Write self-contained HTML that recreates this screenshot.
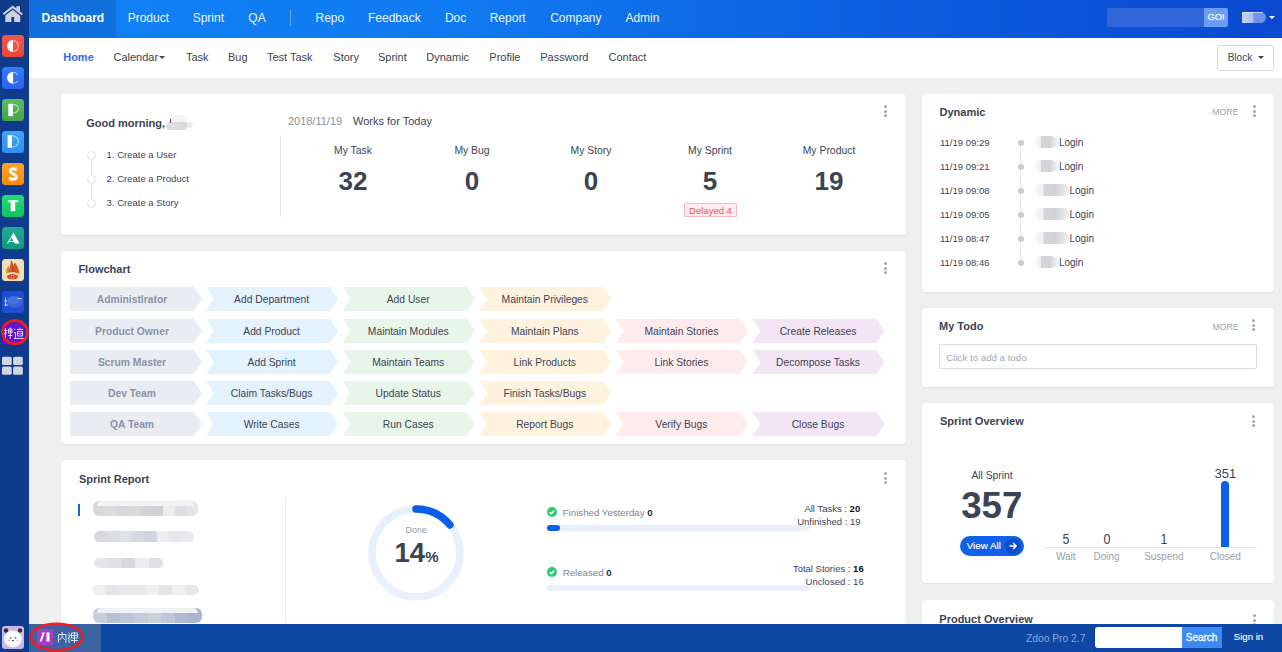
<!DOCTYPE html>
<html><head><meta charset="utf-8"><title>Zdoo Dashboard</title>
<style>
html,body{margin:0;padding:0;width:1282px;height:652px;overflow:hidden;background:#efefef;}
body{position:relative;font-family:"Liberation Sans",sans-serif;}
.r{position:absolute;box-sizing:border-box;}
svg.r{overflow:visible;}
.t{position:absolute;line-height:1;white-space:nowrap;}
</style></head><body>
<div class="r" style="left:0px;top:0px;width:1282px;height:652px;background:#efefef;"></div>
<div class="r" style="left:29px;top:0px;width:1253px;height:37.5px;background:linear-gradient(90deg,#1082f6 0%,#107af0 35%,#0c5ddd 70%,#0a49d0 100%);"></div>
<div class="r" style="left:29px;top:0px;width:87px;height:37.5px;background:rgba(20,90,190,0.45);"></div>
<div class="r" style="left:29px;top:37.5px;width:1253px;height:40.5px;background:#fff;"></div>
<div class="r" style="left:0px;top:0px;width:29px;height:652px;background:#0f3b8d;"></div>
<div class="r" style="left:29px;top:624px;width:1253px;height:28px;background:#0f47a4;"></div>
<svg class="r" style="left:0;top:0;" width="29" height="652" viewBox="0 0 29 652">
<defs>
<linearGradient id="gR" x1="0" y1="0" x2="0" y2="1"><stop offset="0" stop-color="#f1584f"/><stop offset="1" stop-color="#ee4536"/></linearGradient>
<linearGradient id="gC" x1="0" y1="0" x2="0" y2="1"><stop offset="0" stop-color="#337cf8"/><stop offset="1" stop-color="#2a63ef"/></linearGradient>
<linearGradient id="gP" x1="0" y1="0" x2="0" y2="1"><stop offset="0" stop-color="#5cbb5f"/><stop offset="1" stop-color="#45a349"/></linearGradient>
<linearGradient id="gD" x1="0" y1="0" x2="0" y2="1"><stop offset="0" stop-color="#42a5f5"/><stop offset="1" stop-color="#2e8ff0"/></linearGradient>
<linearGradient id="gS" x1="0" y1="0" x2="0" y2="1"><stop offset="0" stop-color="#ffa020"/><stop offset="1" stop-color="#fb8c0c"/></linearGradient>
<linearGradient id="gT" x1="0" y1="0" x2="0" y2="1"><stop offset="0" stop-color="#1fdc74"/><stop offset="1" stop-color="#10c35f"/></linearGradient>
<linearGradient id="gA" x1="0" y1="0" x2="0" y2="1"><stop offset="0" stop-color="#22a894"/><stop offset="1" stop-color="#149a80"/></linearGradient>
</defs>
<!-- home -->
<g fill="#cdd2dd">
<path d="M2.6 13.6 L12.7 5.6 L22.9 13.8 L21.6 15.2 L12.7 8.2 L3.9 15.0 Z"/>
<rect x="16.3" y="6.2" width="3.7" height="5"/>
<path d="M5.3 15.6 L12.7 9.8 L20.2 15.7 V21.9 H14.2 V17 H11.4 V21.9 H5.3 Z"/>
</g>
<!-- red -->
<rect x="2" y="35" width="22" height="22" rx="3.5" fill="url(#gR)"/>
<path d="M13 40 A6 6 0 0 0 13 52 Z" fill="#fff"/>
<path d="M13 40.6 A5.4 5.4 0 0 1 13 51.4" fill="none" stroke="rgba(255,255,255,0.55)" stroke-width="1.2"/>
<!-- C -->
<rect x="2" y="67" width="22" height="22" rx="3.5" fill="url(#gC)"/>
<path d="M13.1 71.8 A6 6 0 0 0 13.1 83.8 Z" fill="#fff"/>
<path d="M13.1 72.4 A5.4 5.4 0 0 1 17.8 75 M17.8 81 A5.4 5.4 0 0 1 13.1 83.2" fill="none" stroke="rgba(255,255,255,0.55)" stroke-width="1.2"/>
<!-- P -->
<rect x="2" y="99" width="22" height="22" rx="3.5" fill="url(#gP)"/>
<rect x="8.3" y="103.8" width="4.6" height="12.4" fill="#fff"/>
<path d="M12.9 104.4 A5.6 4.3 0 0 1 12.9 113" fill="none" stroke="rgba(255,255,255,0.6)" stroke-width="1.1"/>
<!-- D -->
<rect x="2" y="131" width="22" height="22" rx="3.5" fill="url(#gD)"/>
<rect x="7.6" y="135.2" width="4.3" height="12.6" fill="#fff"/>
<path d="M11.9 135.8 A6.6 5.7 0 0 1 11.9 147.2" fill="none" stroke="rgba(255,255,255,0.6)" stroke-width="1.1"/>
<!-- S -->
<rect x="2" y="163" width="22" height="22" rx="3.5" fill="url(#gS)"/>
<path d="M15.6 169.6 C14 168.4 10.2 168.6 10.2 171.2 C10.2 173.6 16.2 174 16.2 176.9 C16.2 179.4 12.2 179.8 10.2 178.6" fill="none" stroke="#fff" stroke-width="3" stroke-linecap="round"/><path d="M15.5 168.5 L17 166.8 M10.5 179 L9 180.3" stroke="#fff" stroke-width="0.9" opacity="0.8"/>
<!-- T -->
<rect x="2" y="195" width="22" height="22" rx="3.5" fill="url(#gT)"/>
<rect x="7.8" y="200" width="10.6" height="2.2" fill="#fff" opacity="0.8"/>
<rect x="10.6" y="200.8" width="4.6" height="10.4" fill="#fff"/>
<!-- A -->
<rect x="2" y="227" width="22" height="22" rx="3.5" fill="url(#gA)"/>
<path d="M13.5 232.4 L19.6 243.6 L14.8 243.6 L13.8 241.7 L9.2 241.7 L8.2 243.6 L6.8 243.6 Z" fill="#fff"/>
<path d="M11.7 237.6 L9.8 241 L13.4 241 Z" fill="#1aa08a"/>
<path d="M12.6 234 L7.8 243.6" stroke="#1aa08a" stroke-width="0.7" opacity="0.6"/>
<!-- fire -->
<rect x="2" y="259" width="22" height="22" rx="3.5" fill="#f3dfb6"/>
<defs><linearGradient id="gF" x1="0" y1="0" x2="1" y2="0"><stop offset="0" stop-color="#e3a03a"/><stop offset="0.5" stop-color="#c9421f"/><stop offset="1" stop-color="#d7662c"/></linearGradient></defs>
<path d="M6 273.5 C5.6 270.5 7 267.8 8.5 265.8 C9 267 9.4 268 10 268.6 C10 265.2 10.7 262.2 11.4 260 C12.3 262.5 13.2 265 13.8 266.2 C14 264.7 14.5 263.3 15 262.5 C16.6 265 19.6 269 19.3 273.8 C17 272.8 15 272.2 12.6 272.2 C10.2 272.2 8 272.7 6 273.5 Z" fill="url(#gF)"/>
<ellipse cx="12.5" cy="276.8" rx="5.6" ry="2.7" fill="#d94b2b"/>
<circle cx="12.5" cy="276.8" r="1.8" fill="#efd9b5"/>
<circle cx="12.5" cy="276.8" r="1.2" fill="#5b4b3b"/>
<!-- blurred blue -->
<rect x="2" y="291" width="22" height="22" rx="3.5" fill="#1c4fd6"/>
<ellipse cx="14.5" cy="301.8" rx="8.3" ry="6" fill="#3b63d8"/><ellipse cx="13.5" cy="300.5" rx="6" ry="4" fill="#4a70de"/><path d="M17.5 298.5 H22" stroke="#e8eeff" stroke-width="0.8"/>
<path d="M5.5 297.5 V306 M4.5 301 H7 M4.5 305 H8" stroke="#e8eeff" stroke-width="0.8" fill="none"/>
<!-- zentao purple -->
<rect x="2" y="322.5" width="22" height="22" rx="3.5" fill="#6217cc"/>
<g stroke="#fff" stroke-width="0.8" fill="none" opacity="0.95">
<path d="M5.5 328 V339 M3.8 330.5 H7.5 M4 334 L7 332.5 M8.5 329 H12 V333 H8.5 Z M8.5 331 H12 M10.2 327.5 V339 M8 335.5 H12.5"/>
<path d="M14 328.5 L15.2 330 M14 332.5 H15.5 V337.5 L14 338.5 H24 M17 329.5 H23 M17.5 331.5 H22.5 V336 H17.5 Z M17.5 333.7 H22.5 M20 327.5 L19.5 329.5"/>
</g>
<ellipse cx="15" cy="332.2" rx="12.4" ry="11.7" fill="none" stroke="#f01c24" stroke-width="2.8"/>
<!-- grid -->
<g fill="#d1d6e0">
<rect x="2" y="356.8" width="9.7" height="8.3" rx="1.5"/>
<rect x="13.1" y="356.8" width="9.7" height="8.3" rx="1.5"/>
<rect x="2" y="366.5" width="9.7" height="8.3" rx="1.5"/>
<rect x="13.1" y="366.5" width="9.7" height="8.3" rx="1.5"/>
</g>
<!-- avatar -->
<rect x="2" y="626" width="22" height="23" rx="3" fill="#c9b5e8"/>
<circle cx="6" cy="630.5" r="2.3" fill="#333"/>
<circle cx="20" cy="630.5" r="2.3" fill="#333"/>
<ellipse cx="13" cy="639" rx="9" ry="8.5" fill="#fafafa"/>
<ellipse cx="13" cy="638.8" rx="8" ry="7.5" fill="#fff" stroke="#ddd" stroke-width="0.5"/>
<circle cx="10.5" cy="638" r="0.8" fill="#333"/>
<circle cx="15.5" cy="638" r="0.8" fill="#333"/>
<ellipse cx="13" cy="640.5" rx="1" ry="0.8" fill="#444"/>
<circle cx="8.6" cy="640.5" r="1.1" fill="#f5b8c8"/>
<circle cx="17.4" cy="640.5" r="1.1" fill="#f5b8c8"/>
</svg>
<div class="t" style="left:41.50px;top:11.84px;font-size:12px;font-weight:700;color:#fff;">Dashboard</div>
<div class="t" style="left:127.70px;top:11.84px;font-size:12px;font-weight:400;color:#eef4ff;">Product</div>
<div class="t" style="left:192.70px;top:11.84px;font-size:12px;font-weight:400;color:#eef4ff;">Sprint</div>
<div class="t" style="left:248.30px;top:11.84px;font-size:12px;font-weight:400;color:#eef4ff;">QA</div>
<div class="t" style="left:315.50px;top:11.84px;font-size:12px;font-weight:400;color:#eef4ff;">Repo</div>
<div class="t" style="left:368.00px;top:11.84px;font-size:12px;font-weight:400;color:#eef4ff;">Feedback</div>
<div class="t" style="left:444.90px;top:11.84px;font-size:12px;font-weight:400;color:#eef4ff;">Doc</div>
<div class="t" style="left:489.70px;top:11.84px;font-size:12px;font-weight:400;color:#eef4ff;">Report</div>
<div class="t" style="left:550.20px;top:11.84px;font-size:12px;font-weight:400;color:#eef4ff;">Company</div>
<div class="t" style="left:625.40px;top:11.84px;font-size:12px;font-weight:400;color:#eef4ff;">Admin</div>
<div class="r" style="left:290px;top:10px;width:1px;height:16px;background:rgba(255,255,255,0.35);"></div>
<div class="r" style="left:1107px;top:8px;width:97px;height:19px;background:#3267dc;border-radius:2px 0 0 2px;"></div>
<div class="r" style="left:1204px;top:8px;width:24px;height:19px;background:#6d9cf4;border-radius:0 2px 2px 0;"></div>
<div class="t" style="left:916.00px;width:600px;text-align:center;top:13.13px;font-size:9.3px;font-weight:400;color:#fff;-webkit-text-stroke:0.2px #fff;">GO!</div>
<div class="r" style="left:1242px;top:12px;width:24px;height:11px;background:linear-gradient(90deg,#c9d6f5 0%,#a9bdf0 45%,#6f93e8 50%,#6c90e6 100%);border-radius:1px 6px 6px 1px;"></div>
<div class="r" style="left:1243px;top:12px;width:20px;height:1.2px;background:rgba(255,255,255,0.6);"></div>
<div class="r" style="left:1269px;top:15.5px;width:0;height:0;border-left:3px solid transparent;border-right:3px solid transparent;border-top:3px solid #fff;"></div>
<div class="t" style="left:63.20px;top:51.69px;font-size:11px;font-weight:700;color:#2e6be6;">Home</div>
<div class="t" style="left:113.50px;top:51.69px;font-size:11px;font-weight:400;color:#3c4353;">Calendar</div>
<div class="t" style="left:186.00px;top:51.69px;font-size:11px;font-weight:400;color:#3c4353;">Task</div>
<div class="t" style="left:228.00px;top:51.69px;font-size:11px;font-weight:400;color:#3c4353;">Bug</div>
<div class="t" style="left:266.90px;top:51.69px;font-size:11px;font-weight:400;color:#3c4353;">Test Task</div>
<div class="t" style="left:333.30px;top:51.69px;font-size:11px;font-weight:400;color:#3c4353;">Story</div>
<div class="t" style="left:378.00px;top:51.69px;font-size:11px;font-weight:400;color:#3c4353;">Sprint</div>
<div class="t" style="left:426.30px;top:51.69px;font-size:11px;font-weight:400;color:#3c4353;">Dynamic</div>
<div class="t" style="left:489.30px;top:51.69px;font-size:11px;font-weight:400;color:#3c4353;">Profile</div>
<div class="t" style="left:540.20px;top:51.69px;font-size:11px;font-weight:400;color:#3c4353;">Password</div>
<div class="t" style="left:608.50px;top:51.69px;font-size:11px;font-weight:400;color:#3c4353;">Contact</div>
<div class="r" style="left:159px;top:55.8px;width:0;height:0;border-left:3.5px solid transparent;border-right:3.5px solid transparent;border-top:3.5px solid #3c4353;"></div>
<div class="r" style="left:1216.8px;top:45px;width:57px;height:25.5px;border:1px solid #d6dae3;border-radius:2px;background:#fff;"></div>
<div class="t" style="left:1227.70px;top:52.53px;font-size:10px;font-weight:400;color:#3c4353;">Block</div>
<div class="r" style="left:1257.5px;top:56px;width:0;height:0;border-left:3.5px solid transparent;border-right:3.5px solid transparent;border-top:3.5px solid #3c4353;"></div>
<div class="r" style="left:61px;top:94px;width:845px;height:141px;background:#fff;border-radius:4px;box-shadow:0 1px 2px rgba(0,0,0,0.06);"></div>
<div class="r" style="left:61px;top:251px;width:845px;height:193px;background:#fff;border-radius:4px;box-shadow:0 1px 2px rgba(0,0,0,0.06);"></div>
<div class="r" style="left:61px;top:460px;width:845px;height:200px;background:#fff;border-radius:4px;box-shadow:0 1px 2px rgba(0,0,0,0.06);"></div>
<div class="r" style="left:922px;top:94px;width:352px;height:198px;background:#fff;border-radius:4px;box-shadow:0 1px 2px rgba(0,0,0,0.06);"></div>
<div class="r" style="left:922px;top:308px;width:352px;height:79px;background:#fff;border-radius:4px;box-shadow:0 1px 2px rgba(0,0,0,0.06);"></div>
<div class="r" style="left:922px;top:403px;width:352px;height:180px;background:#fff;border-radius:4px;box-shadow:0 1px 2px rgba(0,0,0,0.06);"></div>
<div class="r" style="left:922px;top:600px;width:352px;height:60px;background:#fff;border-radius:4px;box-shadow:0 1px 2px rgba(0,0,0,0.06);"></div>
<div class="t" style="left:86.30px;top:117.69px;font-size:11px;font-weight:700;color:#3c4353;">Good morning,</div>
<div class="r" style="left:186px;top:121.5px;width:6.5px;height:6.5px;background:#ededf0;border-radius:1px 3px 3px 1px;"></div>
<div class="r" style="left:171.8px;top:115px;width:14.5px;height:8px;background:#f3f3f5;border-radius:6px 6px 0 0;"></div>
<div class="r" style="left:166.3px;top:121.7px;width:20.7px;height:8.6px;background:linear-gradient(90deg,#e2e2e5,#d9d9dd);border-radius:4px 1px 4px 4px;"></div>
<div class="r" style="left:170px;top:118.8px;width:1.3px;height:4px;background:#7a3344;"></div>
<div class="r" style="left:91px;top:159.5px;width:1px;height:40px;background:#e9e9e9;"></div>
<div class="r" style="left:87.0px;top:150.6px;width:9px;height:9px;border:1px solid #e6e6e6;border-radius:50%;background:#fff;"></div>
<div class="t" style="left:106.60px;top:149.96px;font-size:9.5px;font-weight:400;color:#3c4353;">1. Create a User</div>
<div class="r" style="left:87.0px;top:174.6px;width:9px;height:9px;border:1px solid #e6e6e6;border-radius:50%;background:#fff;"></div>
<div class="t" style="left:106.60px;top:173.96px;font-size:9.5px;font-weight:400;color:#3c4353;">2. Create a Product</div>
<div class="r" style="left:87.0px;top:198.7px;width:9px;height:9px;border:1px solid #e6e6e6;border-radius:50%;background:#fff;"></div>
<div class="t" style="left:106.60px;top:197.96px;font-size:9.5px;font-weight:400;color:#3c4353;">3. Create a Story</div>
<div class="t" style="left:287.90px;top:115.69px;font-size:11px;font-weight:400;color:#8b91a0;">2018/11/19</div>
<div class="t" style="left:353.00px;top:115.69px;font-size:11px;font-weight:400;color:#3c4353;">Works for Today</div>
<div class="r" style="left:280px;top:135px;width:1px;height:82px;background:#e8e8e8;"></div>
<div class="t" style="left:53.00px;width:600px;text-align:center;top:146.20px;font-size:10.4px;font-weight:400;color:#3c4353;">My Task</div>
<div class="t" style="left:53.00px;width:600px;text-align:center;top:168.19px;font-size:26px;font-weight:700;color:#3c4353;">32</div>
<div class="t" style="left:172.00px;width:600px;text-align:center;top:146.20px;font-size:10.4px;font-weight:400;color:#3c4353;">My Bug</div>
<div class="t" style="left:172.00px;width:600px;text-align:center;top:168.19px;font-size:26px;font-weight:700;color:#3c4353;">0</div>
<div class="t" style="left:291.00px;width:600px;text-align:center;top:146.20px;font-size:10.4px;font-weight:400;color:#3c4353;">My Story</div>
<div class="t" style="left:291.00px;width:600px;text-align:center;top:168.19px;font-size:26px;font-weight:700;color:#3c4353;">0</div>
<div class="t" style="left:410.00px;width:600px;text-align:center;top:146.20px;font-size:10.4px;font-weight:400;color:#3c4353;">My Sprint</div>
<div class="t" style="left:410.00px;width:600px;text-align:center;top:168.19px;font-size:26px;font-weight:700;color:#3c4353;">5</div>
<div class="t" style="left:529.00px;width:600px;text-align:center;top:146.20px;font-size:10.4px;font-weight:400;color:#3c4353;">My Product</div>
<div class="t" style="left:529.00px;width:600px;text-align:center;top:168.19px;font-size:26px;font-weight:700;color:#3c4353;">19</div>
<div class="r" style="left:684px;top:203.3px;width:52.5px;height:14.2px;background:#ffecee;border:1px solid #f9b9c2;border-radius:1px;"></div>
<div class="t" style="left:410.50px;width:600px;text-align:center;top:205.96px;font-size:9.5px;font-weight:400;color:#e85567;">Delayed 4</div>
<div class="r" style="left:884.2px;top:105.2px;width:3px;height:3px;border-radius:50%;background:#a0a6b4;"></div>
<div class="r" style="left:884.2px;top:109.8px;width:3px;height:3px;border-radius:50%;background:#a0a6b4;"></div>
<div class="r" style="left:884.2px;top:114.39999999999999px;width:3px;height:3px;border-radius:50%;background:#a0a6b4;"></div>
<div class="t" style="left:78.40px;top:264.09px;font-size:11px;font-weight:700;color:#3c4353;">Flowchart</div>
<div class="r" style="left:884.2px;top:261.9px;width:3px;height:3px;border-radius:50%;background:#a0a6b4;"></div>
<div class="r" style="left:884.2px;top:266.5px;width:3px;height:3px;border-radius:50%;background:#a0a6b4;"></div>
<div class="r" style="left:884.2px;top:271.1px;width:3px;height:3px;border-radius:50%;background:#a0a6b4;"></div>
<div class="r" style="left:70.00px;top:287.00px;width:132px;height:24px;background:#e9ecf1;clip-path:polygon(0 0, calc(100% - 8px) 0, 100% 50%, calc(100% - 8px) 100%, 0 100%);"></div>
<div class="t" style="left:-168.00px;width:600px;text-align:center;top:294.68px;font-size:10.3px;font-weight:700;color:#8a93a8;">Administlrator</div>
<div class="r" style="left:206.00px;top:287.00px;width:132px;height:24px;background:#e3f2fd;clip-path:polygon(0 0, calc(100% - 8px) 0, 100% 50%, calc(100% - 8px) 100%, 0 100%, 8px 50%);"></div>
<div class="t" style="left:-28.40px;width:600px;text-align:center;top:294.68px;font-size:10.3px;font-weight:400;color:#3c4353;">Add Department</div>
<div class="r" style="left:342.60px;top:287.00px;width:132px;height:24px;background:#e8f5e9;clip-path:polygon(0 0, calc(100% - 8px) 0, 100% 50%, calc(100% - 8px) 100%, 0 100%, 8px 50%);"></div>
<div class="t" style="left:108.20px;width:600px;text-align:center;top:294.68px;font-size:10.3px;font-weight:400;color:#3c4353;">Add User</div>
<div class="r" style="left:479.20px;top:287.00px;width:132px;height:24px;background:#fff3e0;clip-path:polygon(0 0, calc(100% - 8px) 0, 100% 50%, calc(100% - 8px) 100%, 0 100%, 8px 50%);"></div>
<div class="t" style="left:244.80px;width:600px;text-align:center;top:294.68px;font-size:10.3px;font-weight:400;color:#3c4353;">Maintain Privileges</div>
<div class="r" style="left:70.00px;top:319.00px;width:132px;height:24px;background:#e9ecf1;clip-path:polygon(0 0, calc(100% - 8px) 0, 100% 50%, calc(100% - 8px) 100%, 0 100%);"></div>
<div class="t" style="left:-168.00px;width:600px;text-align:center;top:326.68px;font-size:10.3px;font-weight:700;color:#8a93a8;">Product Owner</div>
<div class="r" style="left:206.00px;top:319.00px;width:132px;height:24px;background:#e3f2fd;clip-path:polygon(0 0, calc(100% - 8px) 0, 100% 50%, calc(100% - 8px) 100%, 0 100%, 8px 50%);"></div>
<div class="t" style="left:-28.40px;width:600px;text-align:center;top:326.68px;font-size:10.3px;font-weight:400;color:#3c4353;">Add Product</div>
<div class="r" style="left:342.60px;top:319.00px;width:132px;height:24px;background:#e8f5e9;clip-path:polygon(0 0, calc(100% - 8px) 0, 100% 50%, calc(100% - 8px) 100%, 0 100%, 8px 50%);"></div>
<div class="t" style="left:108.20px;width:600px;text-align:center;top:326.68px;font-size:10.3px;font-weight:400;color:#3c4353;">Maintain Modules</div>
<div class="r" style="left:479.20px;top:319.00px;width:132px;height:24px;background:#fff3e0;clip-path:polygon(0 0, calc(100% - 8px) 0, 100% 50%, calc(100% - 8px) 100%, 0 100%, 8px 50%);"></div>
<div class="t" style="left:244.80px;width:600px;text-align:center;top:326.68px;font-size:10.3px;font-weight:400;color:#3c4353;">Maintain Plans</div>
<div class="r" style="left:615.80px;top:319.00px;width:132px;height:24px;background:#ffebee;clip-path:polygon(0 0, calc(100% - 8px) 0, 100% 50%, calc(100% - 8px) 100%, 0 100%, 8px 50%);"></div>
<div class="t" style="left:381.40px;width:600px;text-align:center;top:326.68px;font-size:10.3px;font-weight:400;color:#3c4353;">Maintain Stories</div>
<div class="r" style="left:752.40px;top:319.00px;width:132px;height:24px;background:#f3e5f5;clip-path:polygon(0 0, calc(100% - 8px) 0, 100% 50%, calc(100% - 8px) 100%, 0 100%, 8px 50%);"></div>
<div class="t" style="left:518.00px;width:600px;text-align:center;top:326.68px;font-size:10.3px;font-weight:400;color:#3c4353;">Create Releases</div>
<div class="r" style="left:70.00px;top:350.00px;width:132px;height:24px;background:#e9ecf1;clip-path:polygon(0 0, calc(100% - 8px) 0, 100% 50%, calc(100% - 8px) 100%, 0 100%);"></div>
<div class="t" style="left:-168.00px;width:600px;text-align:center;top:357.68px;font-size:10.3px;font-weight:700;color:#8a93a8;">Scrum Master</div>
<div class="r" style="left:206.00px;top:350.00px;width:132px;height:24px;background:#e3f2fd;clip-path:polygon(0 0, calc(100% - 8px) 0, 100% 50%, calc(100% - 8px) 100%, 0 100%, 8px 50%);"></div>
<div class="t" style="left:-28.40px;width:600px;text-align:center;top:357.68px;font-size:10.3px;font-weight:400;color:#3c4353;">Add Sprint</div>
<div class="r" style="left:342.60px;top:350.00px;width:132px;height:24px;background:#e8f5e9;clip-path:polygon(0 0, calc(100% - 8px) 0, 100% 50%, calc(100% - 8px) 100%, 0 100%, 8px 50%);"></div>
<div class="t" style="left:108.20px;width:600px;text-align:center;top:357.68px;font-size:10.3px;font-weight:400;color:#3c4353;">Maintain Teams</div>
<div class="r" style="left:479.20px;top:350.00px;width:132px;height:24px;background:#fff3e0;clip-path:polygon(0 0, calc(100% - 8px) 0, 100% 50%, calc(100% - 8px) 100%, 0 100%, 8px 50%);"></div>
<div class="t" style="left:244.80px;width:600px;text-align:center;top:357.68px;font-size:10.3px;font-weight:400;color:#3c4353;">Link Products</div>
<div class="r" style="left:615.80px;top:350.00px;width:132px;height:24px;background:#ffebee;clip-path:polygon(0 0, calc(100% - 8px) 0, 100% 50%, calc(100% - 8px) 100%, 0 100%, 8px 50%);"></div>
<div class="t" style="left:381.40px;width:600px;text-align:center;top:357.68px;font-size:10.3px;font-weight:400;color:#3c4353;">Link Stories</div>
<div class="r" style="left:752.40px;top:350.00px;width:132px;height:24px;background:#f3e5f5;clip-path:polygon(0 0, calc(100% - 8px) 0, 100% 50%, calc(100% - 8px) 100%, 0 100%, 8px 50%);"></div>
<div class="t" style="left:518.00px;width:600px;text-align:center;top:357.68px;font-size:10.3px;font-weight:400;color:#3c4353;">Decompose Tasks</div>
<div class="r" style="left:70.00px;top:381.00px;width:132px;height:24px;background:#e9ecf1;clip-path:polygon(0 0, calc(100% - 8px) 0, 100% 50%, calc(100% - 8px) 100%, 0 100%);"></div>
<div class="t" style="left:-168.00px;width:600px;text-align:center;top:388.68px;font-size:10.3px;font-weight:700;color:#8a93a8;">Dev Team</div>
<div class="r" style="left:206.00px;top:381.00px;width:132px;height:24px;background:#e3f2fd;clip-path:polygon(0 0, calc(100% - 8px) 0, 100% 50%, calc(100% - 8px) 100%, 0 100%, 8px 50%);"></div>
<div class="t" style="left:-28.40px;width:600px;text-align:center;top:388.68px;font-size:10.3px;font-weight:400;color:#3c4353;">Claim Tasks/Bugs</div>
<div class="r" style="left:342.60px;top:381.00px;width:132px;height:24px;background:#e8f5e9;clip-path:polygon(0 0, calc(100% - 8px) 0, 100% 50%, calc(100% - 8px) 100%, 0 100%, 8px 50%);"></div>
<div class="t" style="left:108.20px;width:600px;text-align:center;top:388.68px;font-size:10.3px;font-weight:400;color:#3c4353;">Update Status</div>
<div class="r" style="left:479.20px;top:381.00px;width:132px;height:24px;background:#fff3e0;clip-path:polygon(0 0, calc(100% - 8px) 0, 100% 50%, calc(100% - 8px) 100%, 0 100%, 8px 50%);"></div>
<div class="t" style="left:244.80px;width:600px;text-align:center;top:388.68px;font-size:10.3px;font-weight:400;color:#3c4353;">Finish Tasks/Bugs</div>
<div class="r" style="left:70.00px;top:412.00px;width:132px;height:24px;background:#e9ecf1;clip-path:polygon(0 0, calc(100% - 8px) 0, 100% 50%, calc(100% - 8px) 100%, 0 100%);"></div>
<div class="t" style="left:-168.00px;width:600px;text-align:center;top:419.68px;font-size:10.3px;font-weight:700;color:#8a93a8;">QA Team</div>
<div class="r" style="left:206.00px;top:412.00px;width:132px;height:24px;background:#e3f2fd;clip-path:polygon(0 0, calc(100% - 8px) 0, 100% 50%, calc(100% - 8px) 100%, 0 100%, 8px 50%);"></div>
<div class="t" style="left:-28.40px;width:600px;text-align:center;top:419.68px;font-size:10.3px;font-weight:400;color:#3c4353;">Write Cases</div>
<div class="r" style="left:342.60px;top:412.00px;width:132px;height:24px;background:#e8f5e9;clip-path:polygon(0 0, calc(100% - 8px) 0, 100% 50%, calc(100% - 8px) 100%, 0 100%, 8px 50%);"></div>
<div class="t" style="left:108.20px;width:600px;text-align:center;top:419.68px;font-size:10.3px;font-weight:400;color:#3c4353;">Run Cases</div>
<div class="r" style="left:479.20px;top:412.00px;width:132px;height:24px;background:#fff3e0;clip-path:polygon(0 0, calc(100% - 8px) 0, 100% 50%, calc(100% - 8px) 100%, 0 100%, 8px 50%);"></div>
<div class="t" style="left:244.80px;width:600px;text-align:center;top:419.68px;font-size:10.3px;font-weight:400;color:#3c4353;">Report Bugs</div>
<div class="r" style="left:615.80px;top:412.00px;width:132px;height:24px;background:#ffebee;clip-path:polygon(0 0, calc(100% - 8px) 0, 100% 50%, calc(100% - 8px) 100%, 0 100%, 8px 50%);"></div>
<div class="t" style="left:381.40px;width:600px;text-align:center;top:419.68px;font-size:10.3px;font-weight:400;color:#3c4353;">Verify Bugs</div>
<div class="r" style="left:752.40px;top:412.00px;width:132px;height:24px;background:#f3e5f5;clip-path:polygon(0 0, calc(100% - 8px) 0, 100% 50%, calc(100% - 8px) 100%, 0 100%, 8px 50%);"></div>
<div class="t" style="left:518.00px;width:600px;text-align:center;top:419.68px;font-size:10.3px;font-weight:400;color:#3c4353;">Close Bugs</div>
<div class="t" style="left:78.90px;top:473.79px;font-size:11px;font-weight:700;color:#3c4353;">Sprint Report</div>
<div class="r" style="left:884.2px;top:471.9px;width:3px;height:3px;border-radius:50%;background:#a0a6b4;"></div>
<div class="r" style="left:884.2px;top:476.5px;width:3px;height:3px;border-radius:50%;background:#a0a6b4;"></div>
<div class="r" style="left:884.2px;top:481.1px;width:3px;height:3px;border-radius:50%;background:#a0a6b4;"></div>
<div class="r" style="left:78px;top:504px;width:2px;height:12px;background:#1565e0;"></div>
<div class="r" style="left:92.5px;top:501px;width:105.30000000000001px;height:15px;background:linear-gradient(90deg,#d9d9dc 0.0%, #d9d9dc 11.1%,#dcdcdf 11.1%, #dcdcdf 22.2%,#d6d8de 22.2%, #d6d8de 33.3%,#d9d9dc 33.3%, #d9d9dc 44.4%,#d4d4d8 44.4%, #d4d4d8 55.6%,#cfd0d5 55.6%, #cfd0d5 66.7%,#ececef 66.7%, #ececef 77.8%,#dedfe2 77.8%, #dedfe2 88.9%,#e3e4e7 88.9%, #e3e4e7 100.0%);border-radius:6px;"></div>
<div class="r" style="left:96.5px;top:501px;width:97.30000000000001px;height:5.25px;background:#f3f3f5;border-radius:6px 6px 0 0;"></div>
<div class="r" style="left:93.6px;top:530.5px;width:100.9px;height:11.0px;background:linear-gradient(90deg,#d8d9dd 0.0%, #d8d9dd 12.5%,#dadde3 12.5%, #dadde3 25.0%,#dfe1e5 25.0%, #dfe1e5 37.5%,#d6d9df 37.5%, #d6d9df 50.0%,#d3d6de 50.0%, #d3d6de 62.5%,#eceef1 62.5%, #eceef1 75.0%,#e6e7ea 75.0%, #e6e7ea 87.5%,#e9eaed 87.5%, #e9eaed 100.0%);border-radius:6px;"></div>
<div class="r" style="left:93.6px;top:558px;width:69.80000000000001px;height:10.399999999999977px;background:linear-gradient(90deg,#e5e6ea 0.0%, #e5e6ea 20.0%,#dfe1e6 20.0%, #dfe1e6 40.0%,#d6d9e0 40.0%, #d6d9e0 60.0%,#ecedf0 60.0%, #ecedf0 80.0%,#dde0e6 80.0%, #dde0e6 100.0%);border-radius:6px;"></div>
<div class="r" style="left:91.5px;top:584.5px;width:107.30000000000001px;height:10.700000000000045px;background:linear-gradient(90deg,#eeeff1 0.0%, #eeeff1 12.5%,#e3e5ea 12.5%, #e3e5ea 25.0%,#e8e9ec 25.0%, #e8e9ec 37.5%,#e6e8eb 37.5%, #e6e8eb 50.0%,#eceef0 50.0%, #eceef0 62.5%,#e2e4e8 62.5%, #e2e4e8 75.0%,#eeeff1 75.0%, #eeeff1 87.5%,#e5e7ea 87.5%, #e5e7ea 100.0%);border-radius:6px;"></div>
<div class="r" style="left:92.5px;top:608px;width:109.5px;height:15px;background:linear-gradient(90deg,#c7cfdd 0.0%, #c7cfdd 12.5%,#b6c0d3 12.5%, #b6c0d3 25.0%,#bcc6d8 25.0%, #bcc6d8 37.5%,#c2cadb 37.5%, #c2cadb 50.0%,#c9d0de 50.0%, #c9d0de 62.5%,#bfc8da 62.5%, #bfc8da 75.0%,#b0bbd1 75.0%, #b0bbd1 87.5%,#aab6ce 87.5%, #aab6ce 100.0%);border-radius:6px;"></div>
<div class="r" style="left:96.5px;top:608px;width:101.5px;height:4.5px;background:#eff1f5;border-radius:6px 6px 0 0;"></div>
<div class="r" style="left:285px;top:497px;width:1px;height:127px;background:#e8eef7;"></div>
<svg class="r" style="left:360px;top:497px;" width="112" height="112" viewBox="0 0 112 112"><circle cx="56" cy="56" r="44" fill="none" stroke="#e8f0fb" stroke-width="7.5"/><path d="M56 12 A44 44 0 0 1 89.90 27.95" fill="none" stroke="#0b5ee8" stroke-width="7.5" stroke-linecap="round"/></svg>
<div class="t" style="left:116.30px;width:600px;text-align:center;top:525.88px;font-size:9px;font-weight:400;color:#9aa0ad;">Done</div>
<div class="t" style="left:116.50px;width:600px;text-align:center;top:538.52px;font-size:27.5px;font-weight:700;color:#3c4353;">14<span style="font-size:15px">%</span></div>
<svg class="r" style="left:547.3px;top:507px;" width="10" height="10" viewBox="0 0 10 10"><circle cx="5" cy="5" r="5" fill="#2dc971"/><path d="M2.7 5.1 L4.3 6.7 L7.3 3.6" fill="none" stroke="#fff" stroke-width="1.6"/></svg>
<div class="t" style="left:562.70px;top:507.69px;font-size:9.7px;font-weight:400;color:#7e8494;">Finished Yesterday <b style="color:#2a2f3a">0</b></div>
<div class="r" style="left:547px;top:525px;width:262px;height:6px;background:#e8f0fb;border-radius:3px;"></div>
<div class="r" style="left:547px;top:525px;width:13px;height:6px;background:#0b5ee8;border-radius:3px;"></div>
<div class="t" style="left:260.20px;width:600px;text-align:right;top:503.56px;font-size:9.5px;font-weight:400;color:#3c4353;">All Tasks : <b style="color:#111">20</b></div>
<div class="t" style="left:260.50px;width:600px;text-align:right;top:516.76px;font-size:9.5px;font-weight:400;color:#3c4353;">Unfinished : 19</div>
<svg class="r" style="left:547.3px;top:567px;" width="10" height="10" viewBox="0 0 10 10"><circle cx="5" cy="5" r="5" fill="#2dc971"/><path d="M2.7 5.1 L4.3 6.7 L7.3 3.6" fill="none" stroke="#fff" stroke-width="1.6"/></svg>
<div class="t" style="left:562.70px;top:567.59px;font-size:9.7px;font-weight:400;color:#7e8494;">Released <b style="color:#2a2f3a">0</b></div>
<div class="r" style="left:547px;top:585px;width:262px;height:6px;background:#e8f0fb;border-radius:3px;"></div>
<div class="t" style="left:263.70px;width:600px;text-align:right;top:564.16px;font-size:9.5px;font-weight:400;color:#3c4353;">Total Stories : <b style="color:#111">16</b></div>
<div class="t" style="left:263.70px;width:600px;text-align:right;top:577.06px;font-size:9.5px;font-weight:400;color:#3c4353;">Unclosed : 16</div>
<div class="t" style="left:939.50px;top:107.09px;font-size:11px;font-weight:700;color:#3c4353;">Dynamic</div>
<div class="t" style="left:638.40px;width:600px;text-align:right;top:108.14px;font-size:8.7px;font-weight:400;color:#9ea3b0;">MORE</div>
<div class="r" style="left:1252.5px;top:105.0px;width:3px;height:3px;border-radius:50%;background:#a0a6b4;"></div>
<div class="r" style="left:1252.5px;top:109.6px;width:3px;height:3px;border-radius:50%;background:#a0a6b4;"></div>
<div class="r" style="left:1252.5px;top:114.19999999999999px;width:3px;height:3px;border-radius:50%;background:#a0a6b4;"></div>
<div class="r" style="left:1020.3px;top:143px;width:1px;height:120px;background:#e6e6e6;"></div>
<div class="t" style="left:940.00px;top:137.96px;font-size:9.5px;font-weight:400;color:#3c4353;">11/19 09:29</div>
<div class="r" style="left:1017.8px;top:140px;width:6px;height:6px;border-radius:50%;background:#c9cdd6;"></div>
<div class="r" style="left:1036px;top:136px;width:22px;height:12px;background:linear-gradient(90deg,#f2f2f4 0%,#f2f2f4 20%,#d6d6da 25%,#d2d2d6 60%,#e4e4e7 80%,#f0f0f2 100%);border-radius:4px 6px 6px 4px;"></div>
<div class="t" style="left:1058.90px;top:137.53px;font-size:10px;font-weight:400;color:#3c4353;">Login</div>
<div class="t" style="left:940.00px;top:161.96px;font-size:9.5px;font-weight:400;color:#3c4353;">11/19 09:21</div>
<div class="r" style="left:1017.8px;top:164px;width:6px;height:6px;border-radius:50%;background:#c9cdd6;"></div>
<div class="r" style="left:1036px;top:160px;width:22px;height:12px;background:linear-gradient(90deg,#f2f2f4 0%,#f2f2f4 20%,#d6d6da 25%,#d2d2d6 60%,#e4e4e7 80%,#f0f0f2 100%);border-radius:4px 6px 6px 4px;"></div>
<div class="t" style="left:1058.90px;top:161.53px;font-size:10px;font-weight:400;color:#3c4353;">Login</div>
<div class="t" style="left:940.00px;top:185.96px;font-size:9.5px;font-weight:400;color:#3c4353;">11/19 09:08</div>
<div class="r" style="left:1017.8px;top:188px;width:6px;height:6px;border-radius:50%;background:#c9cdd6;"></div>
<div class="r" style="left:1036px;top:184px;width:33px;height:12px;background:linear-gradient(90deg,#f2f2f4 0%,#f2f2f4 20%,#d6d6da 25%,#d2d2d6 60%,#e4e4e7 80%,#f0f0f2 100%);border-radius:4px 6px 6px 4px;"></div>
<div class="t" style="left:1069.50px;top:185.53px;font-size:10px;font-weight:400;color:#3c4353;">Login</div>
<div class="t" style="left:940.00px;top:209.96px;font-size:9.5px;font-weight:400;color:#3c4353;">11/19 09:05</div>
<div class="r" style="left:1017.8px;top:212px;width:6px;height:6px;border-radius:50%;background:#c9cdd6;"></div>
<div class="r" style="left:1036px;top:208px;width:33px;height:12px;background:linear-gradient(90deg,#f2f2f4 0%,#f2f2f4 20%,#d6d6da 25%,#d2d2d6 60%,#e4e4e7 80%,#f0f0f2 100%);border-radius:4px 6px 6px 4px;"></div>
<div class="t" style="left:1069.50px;top:209.53px;font-size:10px;font-weight:400;color:#3c4353;">Login</div>
<div class="t" style="left:940.00px;top:233.96px;font-size:9.5px;font-weight:400;color:#3c4353;">11/19 08:47</div>
<div class="r" style="left:1017.8px;top:236px;width:6px;height:6px;border-radius:50%;background:#c9cdd6;"></div>
<div class="r" style="left:1036px;top:232px;width:33px;height:12px;background:linear-gradient(90deg,#f2f2f4 0%,#f2f2f4 20%,#d6d6da 25%,#d2d2d6 60%,#e4e4e7 80%,#f0f0f2 100%);border-radius:4px 6px 6px 4px;"></div>
<div class="t" style="left:1069.50px;top:233.53px;font-size:10px;font-weight:400;color:#3c4353;">Login</div>
<div class="t" style="left:940.00px;top:257.96px;font-size:9.5px;font-weight:400;color:#3c4353;">11/19 08:46</div>
<div class="r" style="left:1017.8px;top:260px;width:6px;height:6px;border-radius:50%;background:#c9cdd6;"></div>
<div class="r" style="left:1036px;top:256px;width:22px;height:12px;background:linear-gradient(90deg,#f2f2f4 0%,#f2f2f4 20%,#d6d6da 25%,#d2d2d6 60%,#e4e4e7 80%,#f0f0f2 100%);border-radius:4px 6px 6px 4px;"></div>
<div class="t" style="left:1058.90px;top:257.54px;font-size:10px;font-weight:400;color:#3c4353;">Login</div>
<div class="t" style="left:939.00px;top:320.69px;font-size:11px;font-weight:700;color:#3c4353;">My Todo</div>
<div class="t" style="left:638.50px;width:600px;text-align:right;top:323.14px;font-size:8.7px;font-weight:400;color:#9ea3b0;">MORE</div>
<div class="r" style="left:1252.1px;top:319.2px;width:3px;height:3px;border-radius:50%;background:#a0a6b4;"></div>
<div class="r" style="left:1252.1px;top:323.8px;width:3px;height:3px;border-radius:50%;background:#a0a6b4;"></div>
<div class="r" style="left:1252.1px;top:328.40000000000003px;width:3px;height:3px;border-radius:50%;background:#a0a6b4;"></div>
<div class="r" style="left:939px;top:344.2px;width:318px;height:25.2px;border:1px solid #d9dce3;border-radius:2px;box-sizing:border-box;"></div>
<div class="t" style="left:946.30px;top:352.79px;font-size:9.7px;font-weight:400;color:#a2a6b1;">Click to add a todo</div>
<div class="t" style="left:940.00px;top:415.69px;font-size:11px;font-weight:700;color:#3c4353;">Sprint Overview</div>
<div class="r" style="left:1252.1px;top:414.9px;width:3px;height:3px;border-radius:50%;background:#a0a6b4;"></div>
<div class="r" style="left:1252.1px;top:419.5px;width:3px;height:3px;border-radius:50%;background:#a0a6b4;"></div>
<div class="r" style="left:1252.1px;top:424.1px;width:3px;height:3px;border-radius:50%;background:#a0a6b4;"></div>
<div class="t" style="left:692.00px;width:600px;text-align:center;top:470.58px;font-size:10.3px;font-weight:400;color:#3c4353;">All Sprint</div>
<div class="t" style="left:691.80px;width:600px;text-align:center;top:487.63px;font-size:36.7px;font-weight:700;color:#3c4353;">357</div>
<div class="r" style="left:960px;top:536px;width:64px;height:20px;background:#1061e9;border-radius:10px;"></div>
<div class="t" style="left:966.70px;top:541.20px;font-size:9.8px;font-weight:400;color:#fff;-webkit-text-stroke:0.15px #fff;">View All</div>
<div class="r" style="left:1005px;top:538px;width:16px;height:16px;background:#0b4ec8;border-radius:50%;"></div>
<svg class="r" style="left:1007px;top:540px;" width="12" height="12" viewBox="0 0 12 12"><path d="M2.5 6 H9 M6.2 3 L9 6 L6.2 9" fill="none" stroke="#fff" stroke-width="1.6"/></svg>
<div class="r" style="left:1045px;top:547px;width:212px;height:1px;background:#e6e6e6;"></div>
<div class="t" style="left:765.80px;width:600px;text-align:center;top:532.03px;font-size:14.5px;font-weight:400;color:#3c4353;transform:scaleX(0.86);">5</div>
<div class="t" style="left:806.50px;width:600px;text-align:center;top:532.03px;font-size:14.5px;font-weight:400;color:#3c4353;transform:scaleX(0.86);">0</div>
<div class="t" style="left:863.90px;width:600px;text-align:center;top:532.03px;font-size:14.5px;font-weight:400;color:#3c4353;transform:scaleX(0.86);">1</div>
<div class="t" style="left:925.30px;width:600px;text-align:center;top:466.80px;font-size:13px;font-weight:400;color:#3c4353;">351</div>
<div class="r" style="left:1221.2px;top:481px;width:7.5px;height:66px;background:#0b5ee8;border-radius:4px 4px 0 0;"></div>
<div class="t" style="left:765.80px;width:600px;text-align:center;top:551.53px;font-size:10px;font-weight:400;color:#9a9fa9;">Wait</div>
<div class="t" style="left:806.50px;width:600px;text-align:center;top:551.53px;font-size:10px;font-weight:400;color:#9a9fa9;">Doing</div>
<div class="t" style="left:863.90px;width:600px;text-align:center;top:551.53px;font-size:10px;font-weight:400;color:#9a9fa9;">Suspend</div>
<div class="t" style="left:925.30px;width:600px;text-align:center;top:551.53px;font-size:10px;font-weight:400;color:#9a9fa9;">Closed</div>
<div class="t" style="left:939.30px;top:613.69px;font-size:11px;font-weight:700;color:#3c4353;">Product Overview</div>
<div class="r" style="left:1252.5px;top:613.9px;width:3px;height:3px;border-radius:50%;background:#a0a6b4;"></div>
<div class="r" style="left:1252.5px;top:618.5px;width:3px;height:3px;border-radius:50%;background:#a0a6b4;"></div>
<div class="r" style="left:1252.5px;top:623.1px;width:3px;height:3px;border-radius:50%;background:#a0a6b4;"></div>
<div class="r" style="left:29px;top:624px;width:1253px;height:28px;background:#0f47a4;"></div>
<div class="r" style="left:29px;top:624px;width:72px;height:28px;background:#3b62a1;"></div>
<svg class="r" style="left:29px;top:620px;" width="72" height="32" viewBox="0 0 72 32"><rect x="8" y="9" width="16" height="16" fill="#a53dc3"/><path d="M10.5 21.5 L14 12.5 H16 L12.5 21.5 Z M17.5 12.5 H20.5 V21.5 H17.5 Z" fill="#fff"/><path d="M13 12.5 H14.5 L14 14 H12.5 Z" fill="#fff" opacity="0.7"/><g stroke="#e6f0ff" stroke-width="0.9" fill="none"><path d="M29.5 14.5 V22.5 M29.5 14.5 H37 V22 L36 22.5 M33.2 12 V17 L30.5 20 M33.2 17 L36 20"/><path d="M39.5 12.5 L40.5 13.5 M38.5 15 H41.5 L39 19 M40 17.5 V23 M41 18.5 L42 19.5 M42.5 13 H48.5 V18 H42.5 Z M42.5 15.5 H48.5 M45.5 12 V23 M42 20.5 H49"/></g><ellipse cx="27.6" cy="17" rx="25.8" ry="13.2" fill="none" stroke="#ee1c25" stroke-width="2.6"/></svg>
<div class="t" style="left:1025.90px;top:633.78px;font-size:10.3px;font-weight:400;color:#8ea6d6;">Zdoo Pro 2.7</div>
<div class="r" style="left:1094px;top:624px;width:1px;height:28px;background:#0b3b8c;"></div>
<div class="r" style="left:1095.3px;top:627.3px;width:86.7px;height:20.7px;background:#fff;border-radius:3px 0 0 3px;"></div>
<div class="r" style="left:1182px;top:627.3px;width:40px;height:20.7px;background:#3d8af7;"></div>
<div class="t" style="left:901.60px;width:600px;text-align:center;top:632.53px;font-size:10px;font-weight:400;color:#fff;-webkit-text-stroke:0.3px #fff;">Search</div>
<div class="t" style="left:1233.80px;top:631.87px;font-size:9.6px;font-weight:400;color:#fff;-webkit-text-stroke:0.1px #fff;">Sign in</div>
</body></html>
